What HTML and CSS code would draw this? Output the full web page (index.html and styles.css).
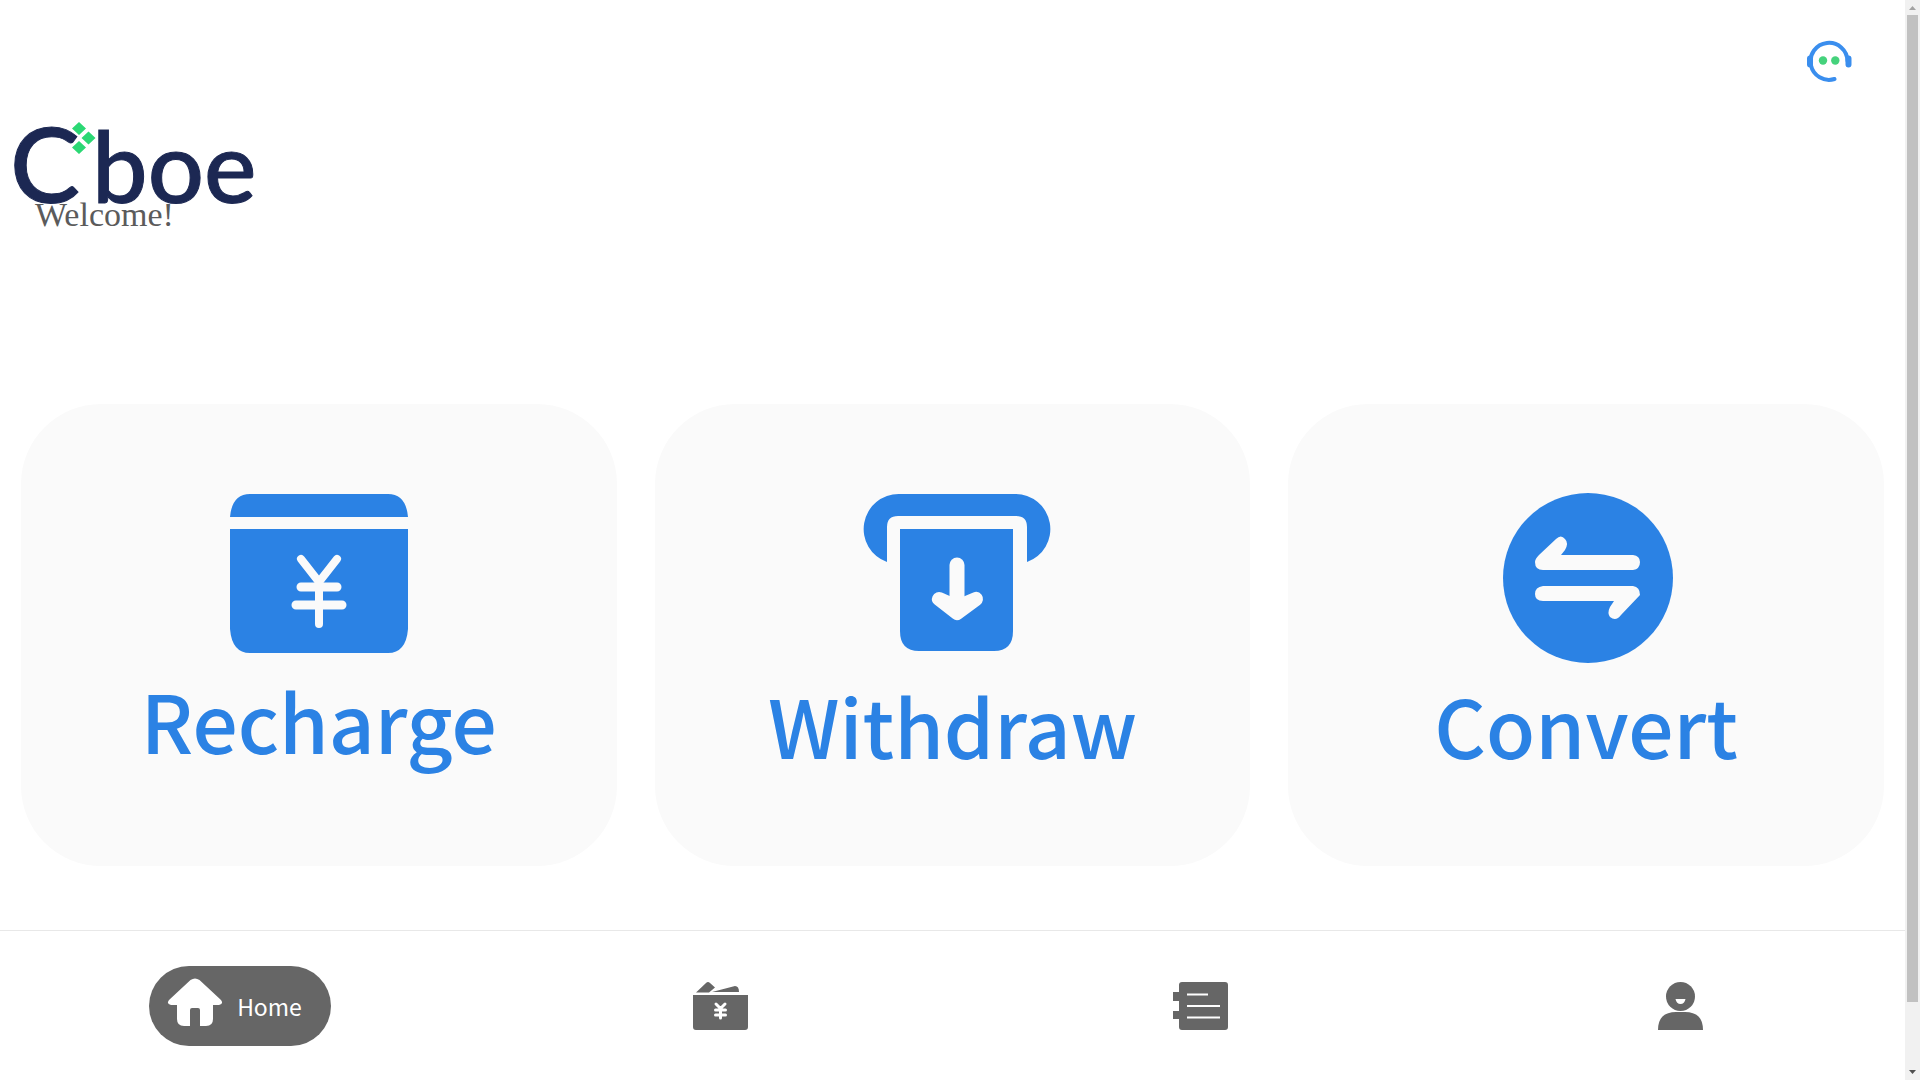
FILE: index.html
```
<!DOCTYPE html>
<html lang="en">
<head>
	<meta charset="utf-8">
	<title>Cboe</title>
	<link rel="stylesheet" href="styles.css">
</head>
<body>
	<div class="page">
		<header class="header">
			<button class="service" aria-label="Customer service">
				<svg width="48" height="44" viewBox="0 0 48 44">
					<path d="M42.500 21A18.500 18.500 0 1 0 29.500 39" fill="none" stroke="#3a8eee" stroke-width="4" stroke-linecap="round"/>
					<path d="M5 18.500v6M43.500 18.500v6" stroke="#3a8eee" stroke-width="6" stroke-linecap="round"/>
					<circle cx="18" cy="20.500" r="4.200" fill="#45d27c"/>
					<circle cx="30.300" cy="20.500" r="4.200" fill="#45d27c"/>
				</svg>
			</button>
			<svg class="logo" width="256" height="90" viewBox="0 0 256 90" role="img" aria-label="Cboe">
				<text class="logo-text big" x="6" y="83">C</text>
				<text class="logo-text" x="88" y="83">boe</text>
				<path d="M75 2l7 6.500-7 6.500-7-6.500zM84.500 11.500l7 6.500-7 6.500-7-6.500zM75 21l7 6.500-7 6.500-7-6.500z" fill="#2bd874"/>
			</svg>
			<p class="welcome">Welcome!</p>
		</header>

		<main class="cards">
			<button class="card">
				<svg width="178" height="166" viewBox="0 0 178 166">
					<path d="M0 24Q2 1 20 1H158Q176 1 178 24zM0 36H178V136Q176 160 158 160H20Q2 160 0 136z" fill="#2b82e4"/>
					<g fill="none" stroke="#fafafa" stroke-width="8" stroke-linecap="round">
						<path d="M71 66L89 89L107 66M89 88V131"/>
						<path d="M71 94H107M66 112H112" stroke-width="9"/>
					</g>
				</svg>
				<span>Recharge</span>
			</button>
			<button class="card">
				<svg width="198" height="171" viewBox="-10 0 198 171">
					<path d="M24 69A35 35 0 0 1 36 1H152A35 35 0 0 1 164 69V34Q164 23 153 23H35Q24 23 24 34z" fill="#2b82e4"/>
					<path d="M37 36H150V138Q150 158 131 158H56Q37 158 37 138z" fill="#2b82e4"/>
					<path d="M94 72V112" stroke="#fafafa" stroke-width="15" stroke-linecap="round"/>
					<path d="M76 106L94 120L113 106L94 114z" fill="#fafafa" stroke="#fafafa" stroke-width="14" stroke-linejoin="round"/>
				</svg>
				<span>Withdraw</span>
			</button>
			<button class="card">
				<svg width="174" height="171" viewBox="-4 0 174 171">
					<circle cx="85" cy="85" r="85" fill="#2b82e4"/>
					<path d="M40 77Q32 77 32 69Q32 66 36 62L53 46Q58 41 62 46Q66 50 62 57L58 62H130Q137 63 137 69Q137 76 130 77zM40 93H130Q137 94 137 102L118 122Q113 129 107 124Q104 120 107 114L111 108H40Q32 108 32 101Q32 94 40 93z" fill="#fafafa"/>
				</svg>
				<span>Convert</span>
			</button>
		</main>

		<nav class="tabbar">
			<a class="tab active" href="#home">
				<svg width="56" height="56" viewBox="0 0 56 56">
					<path d="M23.500 2Q28 -1 32.500 2L54 22Q57 26 52 27H46V41Q46 48 39 48H33V32Q33 30 31 30H25Q23 30 23 32V48H17Q10 48 10 41V27H4Q-1 26 2 22z" fill="#fff"/>
				</svg>
				<span>Home</span>
			</a>
			<a class="tab" href="#assets" aria-label="Assets">
				<svg width="55" height="48" viewBox="0 0 55 48">
					<path d="M3 10.500L13 1Q15 -1 17 1L22 5.500L16 10.500zM19 10L42 4Q46 4 46 10zM0 13H55V45Q55 48 52 48H3Q0 48 0 45z" fill="#666"/>
					<path d="M23 22L27.500 26.500L32 22M22.500 28H32.500M22.500 33H32.500M27.500 27V36" fill="none" stroke="#fff" stroke-width="3" stroke-linecap="round"/>
				</svg>
			</a>
			<a class="tab" href="#orders" aria-label="Orders">
				<svg width="55" height="48" viewBox="0 0 55 48">
					<path d="M6 10V3Q6 0 9 0H52Q55 0 55 3V45Q55 48 52 48H9Q6 48 6 45V37H0V29H6V19H0V10z" fill="#666"/>
					<path d="M14 12.500H35M14 24H47M14 35.500H47" stroke="#fff" stroke-width="2"/>
				</svg>
			</a>
			<a class="tab" href="#mine" aria-label="Mine">
				<svg width="45" height="48" viewBox="0 0 45 48">
					<circle cx="22.500" cy="14.500" r="14.500" fill="#666"/>
					<path d="M17.500 17H27.500Q26.500 22 22.500 22T17.500 17z" fill="#fff"/>
					<path d="M0 48Q0 30 18 30H27Q45 30 45 48z" fill="#666"/>
				</svg>
			</a>
		</nav>
	</div>

	<div class="scrollbar" aria-hidden="true">
		<svg width="15" height="15" viewBox="0 0 15 15"><path d="M4 10H11L7.500 6z" fill="#a3a3a3"/></svg>
		<div class="track"><div class="thumb"></div></div>
		<svg width="15" height="15" viewBox="0 0 15 15"><path d="M4 5H11L7.500 9z" fill="#505050"/></svg>
	</div>
</body>
</html>
```
FILE: styles.css
```
body {
	display: flex;
	height: 100vh;
	margin: 0;
	overflow: hidden;
	background-color: #fff;
}

.page {
	flex: 1;
	min-width: 0;
	overflow-x: hidden;
	overflow-y: scroll;
	scrollbar-width: none;
}

.header {
	display: flex;
	flex-direction: column;
	align-items: flex-start;
	padding: 40px 52px 0 4px;
}

.service {
	align-self: flex-end;
	display: block;
	height: 44px;
	padding: 0;
	border: none;
	background: none;
	cursor: pointer;
}

.logo {
	display: block;
	margin-top: 36px;
	overflow: visible;
}

.logo-text {
	font-family: Lato, sans-serif;
	font-size: 99px;
	font-weight: 500;
	fill: #1c2853;
	stroke: #1c2853;
	stroke-width: 1px;
}

.big {
	font-size: 105px;
}

.welcome {
	margin: -15px 0 0 31px;
	font-family: "Liberation Serif", serif;
	font-size: 34px;
	line-height: 40px;
	color: #5b5b5b;
}

.cards {
	display: grid;
	grid-template-columns: repeat(3, 1fr);
	gap: 38px;
	padding: 169px 21px 132px;
}

.card {
	display: flex;
	flex-direction: column;
	align-items: center;
	height: 462px;
	padding: 89px 0 0;
	border: none;
	border-radius: 80px;
	background-color: #fafafa;
	font-family: "Noto Sans CJK SC", sans-serif;
	font-size: 80px;
	font-weight: 500;
	line-height: 120px;
	color: #2b82e4;
	cursor: pointer;
}

.tabbar {
	position: sticky;
	bottom: 0;
	box-sizing: border-box;
	display: grid;
	grid-template-columns: repeat(4, 1fr);
	align-items: center;
	justify-items: center;
	width: 100vw;
	height: 150px;
	border-top: 1px solid #e8e8e8;
	background-color: #fff;
}

.tab {
	display: flex;
	align-items: center;
	font-family: "Noto Sans CJK SC", sans-serif;
	font-size: 23px;
	text-decoration: none;
	color: #fff;
}

.active {
	gap: 14px;
	height: 80px;
	padding: 0 29px 0 18px;
	border-radius: 40px;
	background-color: #666;
}

.scrollbar {
	display: flex;
	flex-direction: column;
	width: 15px;
	background-color: #f1f1f1;
}

.track {
	flex: 1;
	padding: 0 2px;
}

.thumb {
	height: 94%;
	background-color: #c1c1c1;
}
```
